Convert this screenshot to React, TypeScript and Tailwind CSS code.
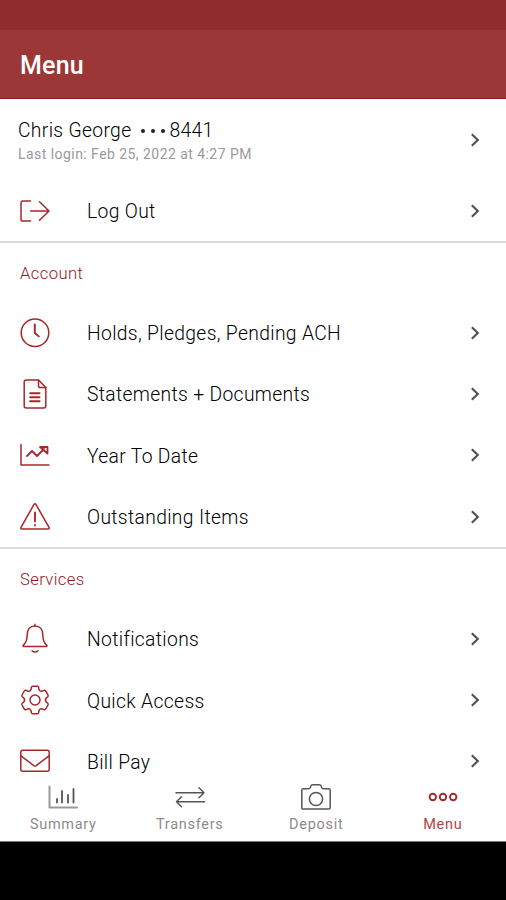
import { ReactNode } from "react";

interface MenuItem {
  label: string;
  icon: ReactNode;
}

interface MenuSection {
  title: string;
  items: MenuItem[];
}

interface NavItem {
  label: string;
  icon: ReactNode;
  active?: boolean;
}

function Icon({ children }: { children: ReactNode }) {
  return (
    <svg
      viewBox="0 0 32 32"
      className="size-8 shrink-0"
      fill="none"
      stroke="currentColor"
      strokeWidth={1.5}
      strokeLinecap="round"
      strokeLinejoin="round"
      aria-hidden="true"
    >
      {children}
    </svg>
  );
}

const logOutIcon = (
  <Icon>
    <path d="M11.5 6H3.8Q2 6 2 7.8V24.2Q2 26 3.8 26H11.5" />
    <path d="M11.5 16H30M20.5 6.8L30 16L20.5 25.2" />
  </Icon>
);

const clockIcon = (
  <Icon>
    <circle cx="16" cy="15.7" r="13.8" />
    <path d="M15.8 7.5V16L19.8 19.4" strokeWidth={1.9} />
  </Icon>
);

const documentIcon = (
  <Icon>
    <path d="M19.5 2H7.2Q5.2 2 5.2 4V28Q5.2 30 7.2 30H24.8Q26.8 30 26.8 28V9.5Z" />
    <path d="M19.5 2V7.7Q19.5 9.5 21.3 9.5H26.8" />
    <path d="M11.2 15.2H20.5M11.2 19.2H20.5M11.2 23.2H20.5" strokeWidth={2} />
  </Icon>
);

const chartIcon = (
  <Icon>
    <path d="M2 5.5V26H30" />
    <path d="M8 17L13 12L18 17L25 10M21 8H28.5V14.5Z" strokeWidth={1.8} />
  </Icon>
);

const warningIcon = (
  <Icon>
    <path d="M14.9 3.7Q16 2 17.1 3.7L30 26.3Q30.7 28 29 28H3Q1.3 28 2 26.3Z" />
    <path d="M16 11.5V20.5M16 24V24.4" strokeWidth={1.9} />
  </Icon>
);

const bellIcon = (
  <Icon>
    <path d="M16 1.3V3M16 3C10.8 3 8.2 6.8 8.2 11.7C8.2 18 6.6 20.3 4.2 22.3Q3.6 23.5 4.8 23.5H27.2Q28.4 23.5 27.8 22.3C25.4 20.3 23.8 18 23.8 11.7C23.8 6.8 21.2 3 16 3Z" />
    <path d="M13 27.7Q16 30.3 19 27.7" />
  </Icon>
);

const gearIcon = (
  <Icon>
    <path d="M13.6 2.2H18.4Q19.4 2.2 19.6 3.4L19.9 5Q20.6 7.8 23.4 7L25 6.4Q26.1 6 26.7 7L29 11Q29.5 12 28.7 12.8L27.4 13.9Q25.3 16 27.4 18.1L28.7 19.2Q29.5 20 29 21L26.7 25Q26.1 26 25 25.6L23.4 25Q20.6 24.2 19.9 27L19.6 28.6Q19.4 29.8 18.4 29.8H13.6Q12.6 29.8 12.4 28.6L12.1 27Q11.4 24.2 8.6 25L7 25.6Q5.9 26 5.3 25L3 21Q2.5 20 3.3 19.2L4.6 18.1Q6.7 16 4.6 13.9L3.3 12.8Q2.5 12 3 11L5.3 7Q5.9 6 7 6.4L8.6 7Q11.4 7.8 12.1 5L12.4 3.4Q12.6 2.2 13.6 2.2Z" />
    <circle cx="16" cy="16" r="5" />
  </Icon>
);

const mailIcon = (
  <Icon>
    <rect x="1.8" y="5.3" width="28.4" height="21" rx="2" />
    <path d="M2 10.8L14.8 20.6Q16 21.4 17.2 20.6L30 10.8" />
  </Icon>
);

const summaryIcon = (
  <Icon>
    <path d="M2.5 5.5V26.5H30" stroke="#9a9a9a" strokeWidth={2} />
    <path d="M10 18V21.5M15 10V21.5M21 14V21.5M26.5 8V21.5" strokeWidth={1.8} />
  </Icon>
);

const transfersIcon = (
  <Icon>
    <path d="M2 11.7H30M25 6.7L30 11.7L25 16.7" />
    <path d="M2.5 20.7H30.5M7.5 15.7L2.5 20.7L7.5 25.7" />
  </Icon>
);

const cameraIcon = (
  <Icon>
    <path d="M3.5 7.8H8.5Q10 7.8 10.4 6.4L10.8 5.1Q11.2 3.8 12.6 3.8H19.4Q20.8 3.8 21.2 5.1L21.6 6.4Q22 7.8 23.5 7.8H28.5Q30.2 7.8 30.2 9.5V26.4Q30.2 28.1 28.5 28.1H3.5Q1.8 28.1 1.8 26.4V9.5Q1.8 7.8 3.5 7.8Z" />
    <circle cx="16" cy="18" r="6.6" />
  </Icon>
);

const moreIcon = (
  <Icon>
    <circle cx="5.8" cy="16" r="3.2" strokeWidth={1.9} />
    <circle cx="16" cy="16" r="3.2" strokeWidth={1.9} />
    <circle cx="26.2" cy="16" r="3.2" strokeWidth={1.9} />
  </Icon>
);

const sections: MenuSection[] = [
  {
    title: "Account",
    items: [
      { label: "Holds, Pledges, Pending ACH", icon: clockIcon },
      { label: "Statements + Documents", icon: documentIcon },
      { label: "Year To Date", icon: chartIcon },
      { label: "Outstanding Items", icon: warningIcon }
    ]
  },
  {
    title: "Services",
    items: [
      { label: "Notifications", icon: bellIcon },
      { label: "Quick Access", icon: gearIcon },
      { label: "Bill Pay", icon: mailIcon }
    ]
  }
];

const navItems: NavItem[] = [
  { label: "Summary", icon: summaryIcon },
  { label: "Transfers", icon: transfersIcon },
  { label: "Deposit", icon: cameraIcon },
  { label: "Menu", icon: moreIcon, active: true }
];

function Chevron() {
  return (
    <svg viewBox="0 0 10 16" className="h-4 w-2.5 shrink-0" fill="none" stroke="#505050" strokeWidth={2.1} aria-hidden="true">
      <path d="M1.8 2.2L7.8 8L1.8 13.8" />
    </svg>
  );
}

function MenuRow({ label, icon }: MenuItem) {
  return (
    <button type="button" className="flex h-[61.4px] w-full shrink-0 items-center pr-[26px] pl-[19px] text-left">
      <span className="text-[#a8262a]">{icon}</span>
      <span className="ml-9 flex-1 pt-[3px] text-[19.3px] leading-6 font-light tracking-[0.34px] text-black">{label}</span>
      <Chevron />
    </button>
  );
}

export default function App() {
  return (
    <div className="flex h-[900px] w-[506px] flex-col overflow-hidden bg-white font-['Roboto',sans-serif]">
      <div className="h-[30px] shrink-0 bg-[#912d2e]" />
      <header className="flex h-[69px] shrink-0 items-center border-b border-[#8a1c20] bg-[#9b3737] px-5 pt-1">
        <h1 className="text-[25px] leading-8 font-medium tracking-[0.2px] text-white">Menu</h1>
      </header>

      <main className="flex min-h-0 flex-1 flex-col overflow-hidden">
        <button type="button" className="flex h-[81px] w-full shrink-0 items-center pr-[26px] pl-[18px] text-left">
          <span className="flex flex-1 flex-col pt-[5px]">
            <span className="flex items-center text-[19.3px] leading-6 font-light tracking-[0.34px] text-black">
              Chris George
              <span className="mr-1 ml-2.5 flex gap-[6px]">
                <span className="size-1 rounded-full bg-[#222]" />
                <span className="size-1 rounded-full bg-[#222]" />
                <span className="size-1 rounded-full bg-[#222]" />
              </span>
              8441
            </span>
            <span className="text-[14px] leading-[22px] tracking-[0.45px] text-[#9a9a9a]">Last login: Feb 25, 2022 at 4:27 PM</span>
          </span>
          <Chevron />
        </button>
        <MenuRow label="Log Out" icon={logOutIcon} />

        {sections.map((section) => (
          <section key={section.title} className="shrink-0 border-t-2 border-[#dcdcdc]">
            <h2 className="flex h-[58.5px] items-center px-5 pt-[2px] text-[16.7px] font-light tracking-[0.35px] text-[#951a1f]">{section.title}</h2>
            {section.items.map((item) => (
              <MenuRow key={item.label} label={item.label} icon={item.icon} />
            ))}
          </section>
        ))}
      </main>

      <nav className="flex h-[60px] shrink-0 bg-white">
        {navItems.map((item) => (
          <button
            type="button"
            key={item.label}
            className={item.active ? "flex flex-1 flex-col items-center text-[#a8262a]" : "flex flex-1 flex-col items-center text-[#555]"}
          >
            {item.icon}
            <span
              className={
                item.active
                  ? "mt-0.5 text-[14.5px] leading-5 tracking-[0.7px] text-[#b04448]"
                  : "mt-0.5 text-[14.5px] leading-5 tracking-[0.7px] text-[#8c8c8c]"
              }
            >
              {item.label}
            </span>
          </button>
        ))}
      </nav>
      <div className="h-[59px] shrink-0 border-t border-[#777] bg-black" />
    </div>
  );
}
